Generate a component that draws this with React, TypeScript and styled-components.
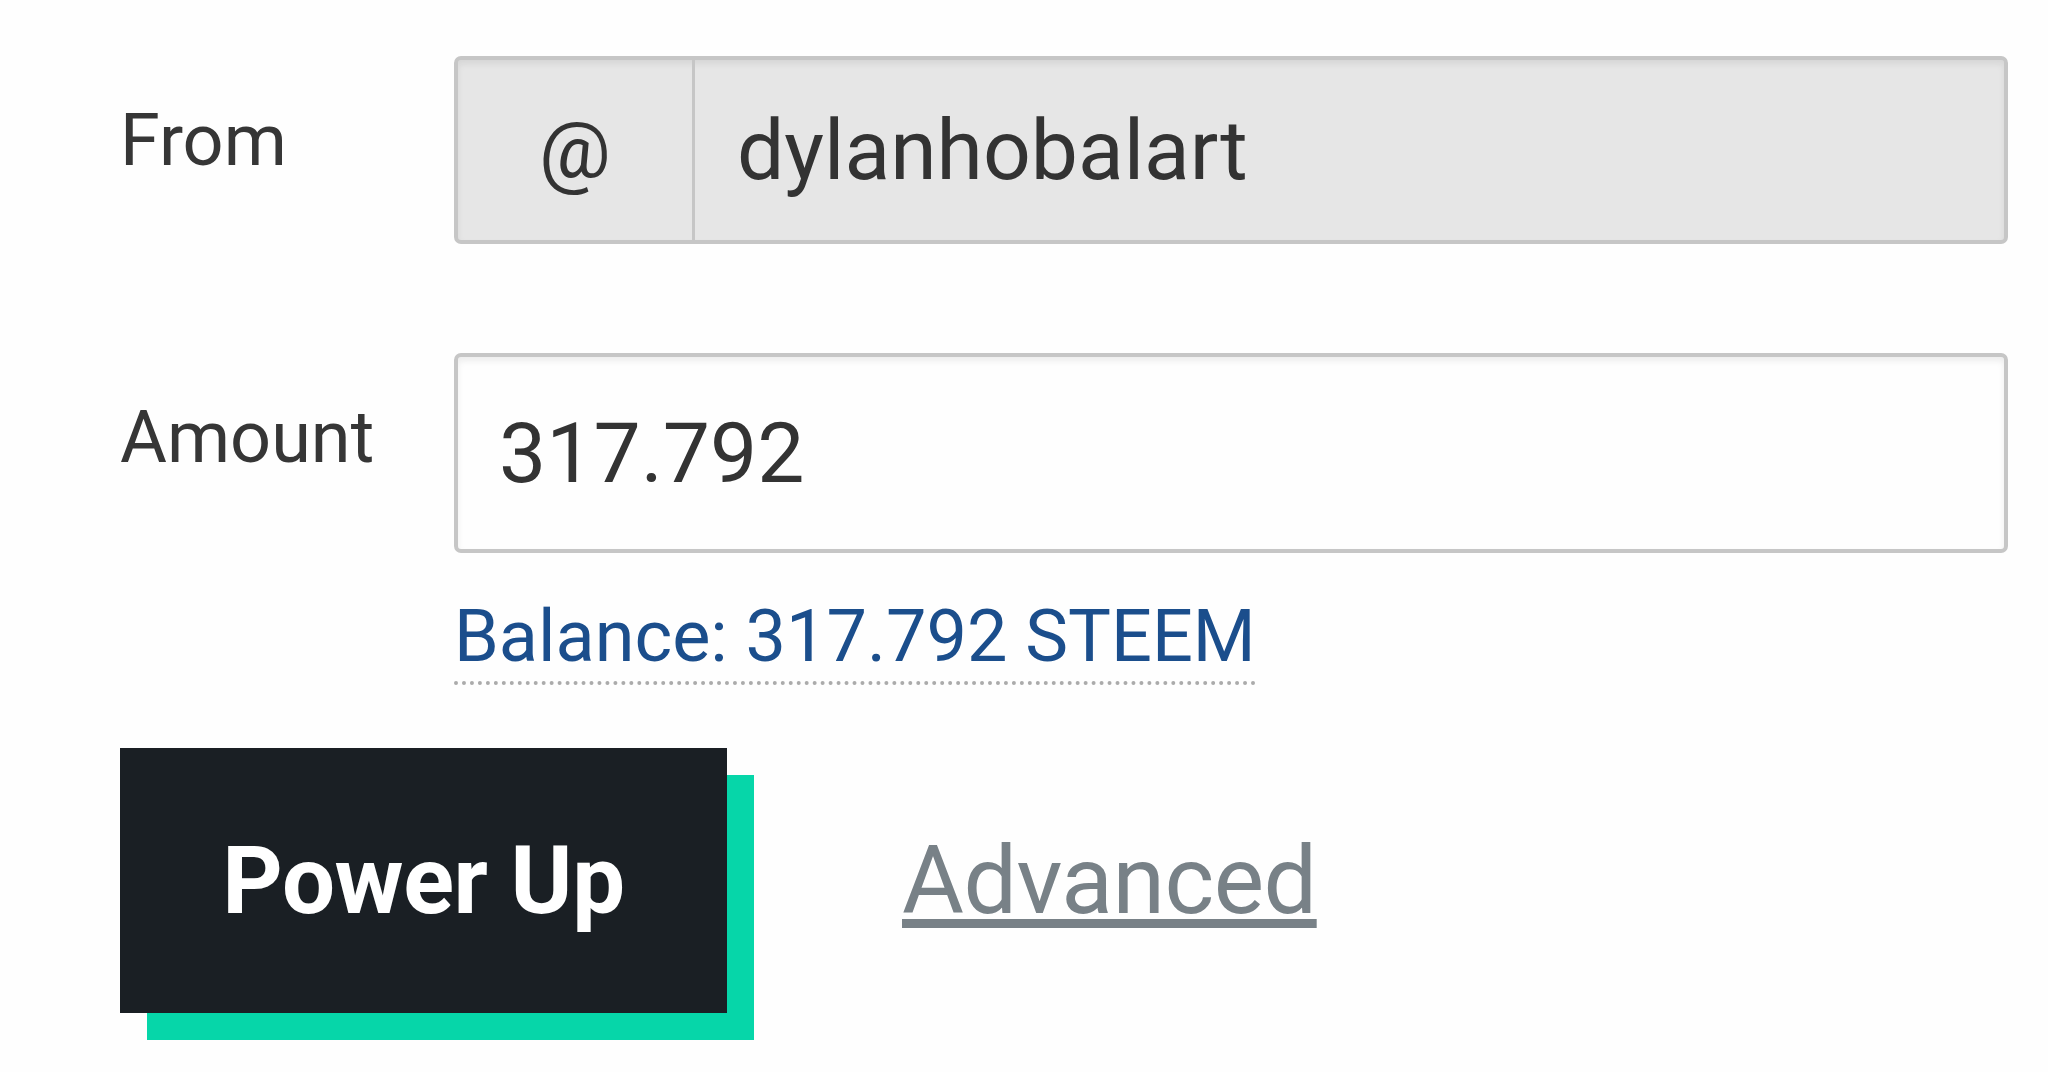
import React from "react";
import styled, { createGlobalStyle } from "styled-components";

const GlobalStyle = createGlobalStyle`
  html, body {
    margin: 0;
    padding: 0;
    background: #fefefe;
  }
  body {
    font-family: Roboto, "Noto Sans", "Liberation Sans", sans-serif;
    color: #333333;
  }
`;

const Page = styled.div`
  width: 2048px;
  height: 1072px;
  box-sizing: border-box;
  padding: 56px 40px 0 120px;
  overflow: hidden;
`;

const FormRow = styled.div<{ $gap?: number }>`
  display: grid;
  grid-template-columns: 334px 1fr;
  margin-top: ${(p) => p.$gap ?? 0}px;
`;

const Label = styled.label`
  padding-top: 49px;
  font-size: 72px;
  line-height: 1;
  color: #363636;
`;

const InputGroup = styled.div`
  display: flex;
  height: 188px;
  box-sizing: border-box;
  border: 4px solid #c6c6c6;
  border-radius: 7px;
  background: #e6e6e6;
  box-shadow: inset 0 4px 6px rgba(0, 0, 0, 0.07);
  overflow: hidden;
`;

const AddOn = styled.span`
  width: 234px;
  flex-shrink: 0;
  display: flex;
  align-items: center;
  justify-content: center;
  border-right: 3px solid #c6c6c6;
  font-size: 80px;
  line-height: 1;
  color: #333333;
`;

const TextField = styled.input<{ $filled?: boolean }>`
  flex: 1;
  min-width: 0;
  box-sizing: border-box;
  height: ${(p) => (p.$filled ? "100%" : "200px")};
  padding: 0 0 0 ${(p) => (p.$filled ? 42 : 41)}px;
  margin: 0;
  border: ${(p) => (p.$filled ? "none" : "4px solid #c6c6c6")};
  border-radius: ${(p) => (p.$filled ? "0" : "7px")};
  background: ${(p) => (p.$filled ? "transparent" : "#fefefe")};
  box-shadow: ${(p) =>
    p.$filled ? "none" : "inset 0 4px 6px rgba(0, 0, 0, 0.07)"};
  font-family: Roboto, "Noto Sans", "Liberation Sans", sans-serif;
  font-size: 84px;
  line-height: 1;
  color: #333333;
  outline: none;
`;

const BalanceRow = styled.div`
  margin: 48px 0 0 334px;
`;

const Balance = styled.span`
  display: inline-block;
  padding-bottom: 8px;
  border-bottom: 4px dotted #ababab;
  font-size: 72px;
  line-height: 1;
  color: #1b4e8c;
  cursor: pointer;
`;

const Actions = styled.div`
  display: flex;
  align-items: center;
  margin-top: 63px;
`;

const PowerButton = styled.button`
  width: 607px;
  height: 265px;
  padding: 0;
  border: none;
  border-radius: 0;
  background: #1a1f24;
  box-shadow: 27px 27px 0 #06d6a9;
  font-family: Roboto, "Noto Sans", "Liberation Sans", sans-serif;
  font-weight: 700;
  font-size: 94px;
  line-height: 1;
  letter-spacing: -0.4px;
  color: #ffffff;
  cursor: pointer;
`;

const AdvancedLink = styled.a`
  margin-left: 175px;
  font-size: 95px;
  line-height: 1;
  letter-spacing: -0.5px;
  color: #788187;
  text-decoration: underline;
  text-decoration-thickness: 9px;
  text-underline-offset: 6px;
  cursor: pointer;
`;

export default function App() {
  return (
    <>
      <GlobalStyle />
      <Page>
        <FormRow>
          <Label>From</Label>
          <InputGroup>
            <AddOn>@</AddOn>
            <TextField $filled readOnly value="dylanhobalart" />
          </InputGroup>
        </FormRow>

        <FormRow $gap={109}>
          <Label>Amount</Label>
          <TextField readOnly value="317.792" />
        </FormRow>

        <BalanceRow>
          <Balance>Balance: 317.792 STEEM</Balance>
        </BalanceRow>

        <Actions>
          <PowerButton>Power Up</PowerButton>
          <AdvancedLink>Advanced</AdvancedLink>
        </Actions>
      </Page>
    </>
  );
}
